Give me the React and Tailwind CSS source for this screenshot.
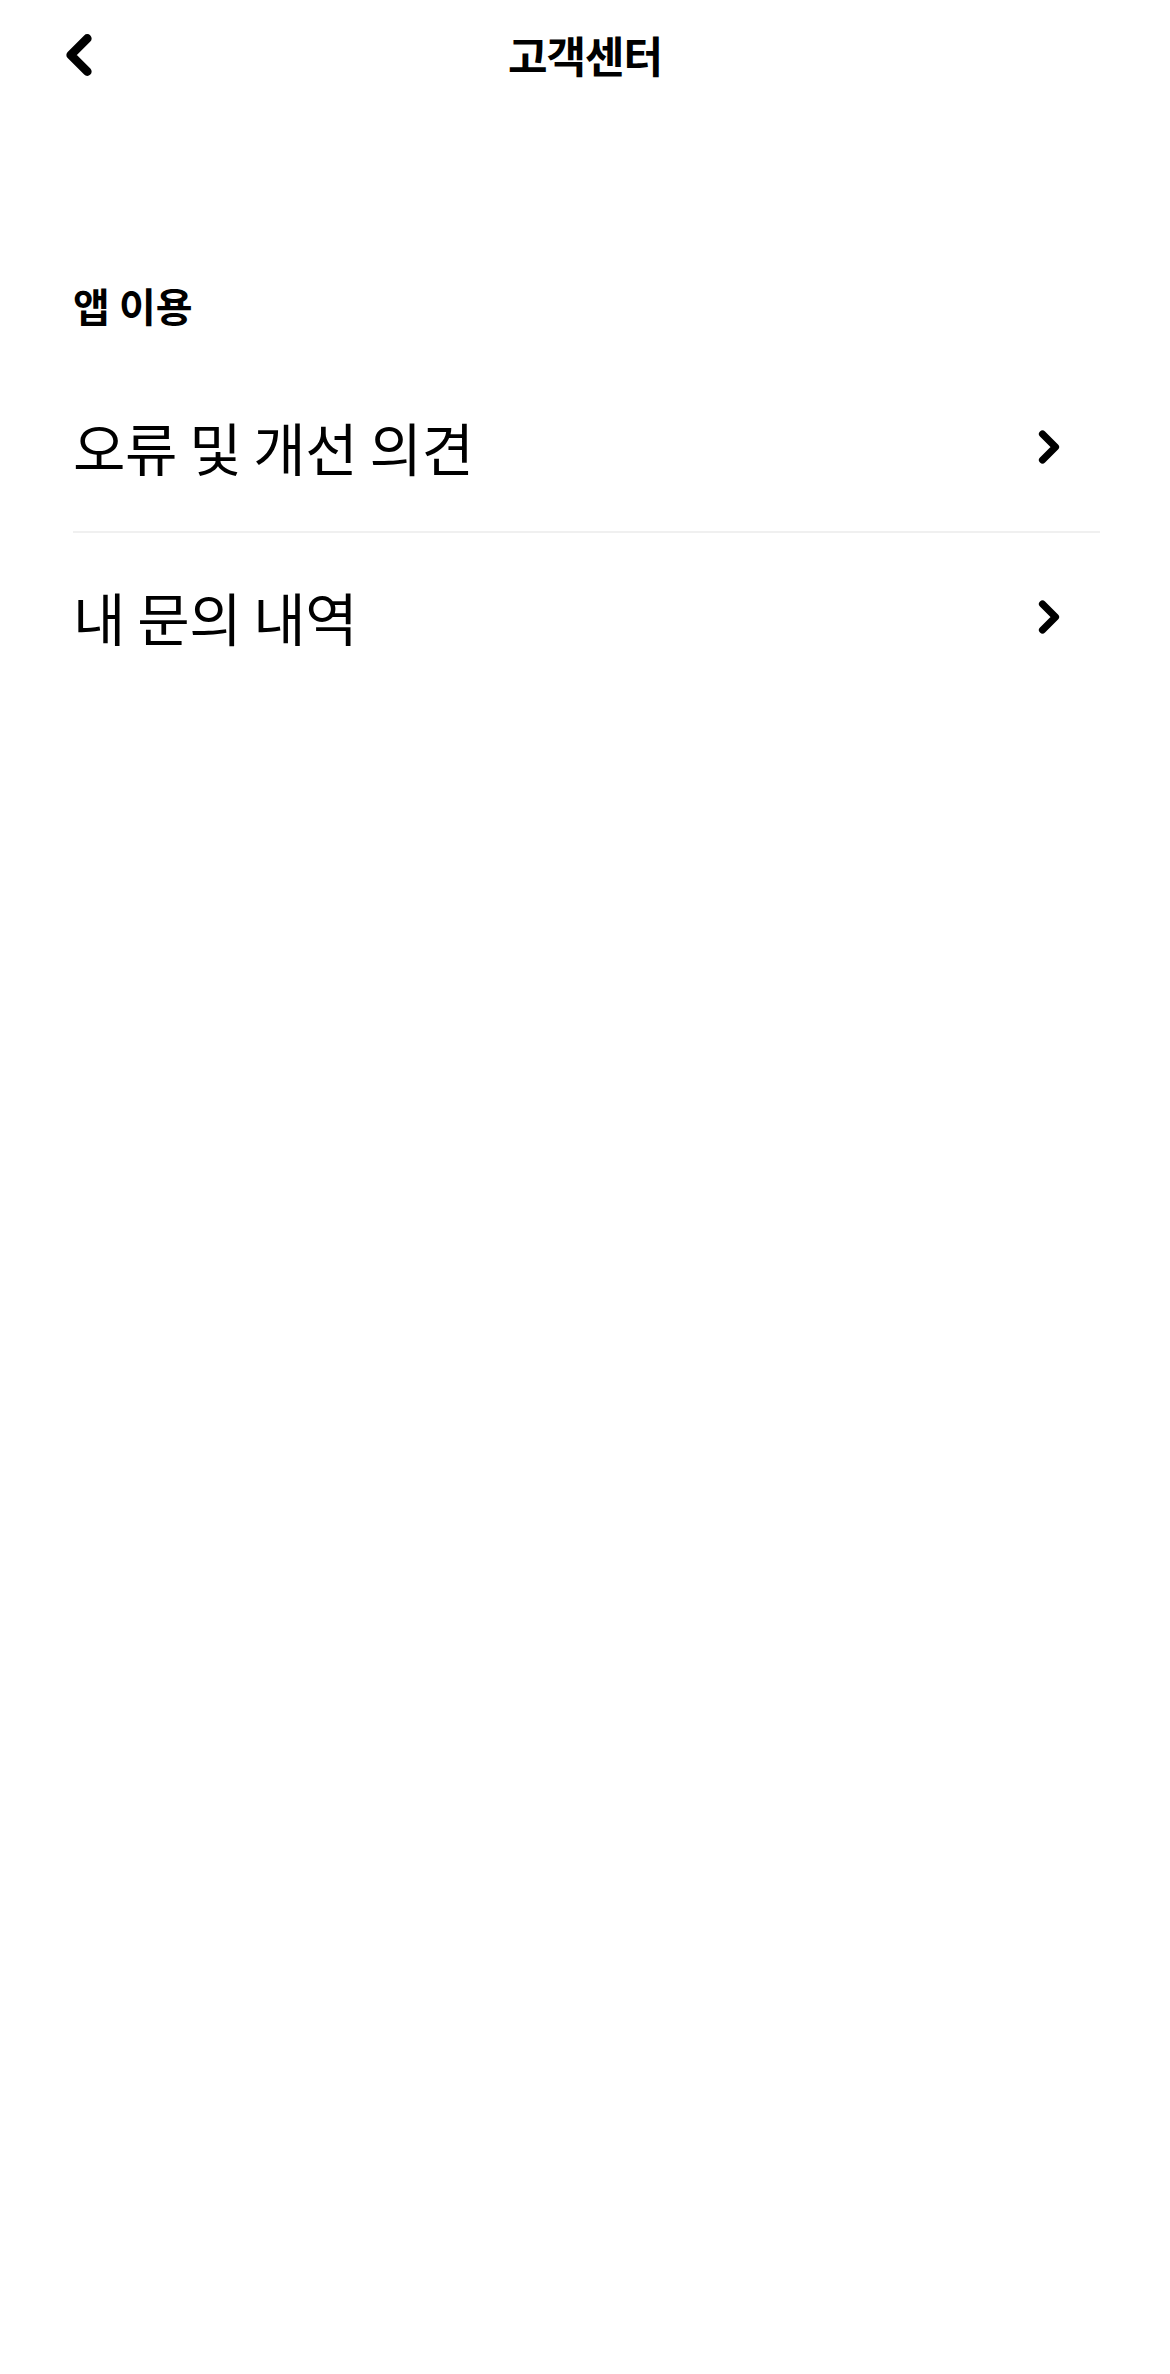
import { ChevronLeft, ChevronRight } from "lucide-react";

const font = { fontFamily: '"Noto Sans CJK KR", "Noto Sans", sans-serif' };

const MenuRow = ({ label }) => (
  <button className="flex h-[168px] w-full items-center justify-between text-left">
    <span className="text-[57px] font-normal tracking-[-0.5px] text-black">{label}</span>
    <ChevronRight className="mr-[25px] h-[52px] w-[52px] text-black" strokeWidth={3.3} />
  </button>
);

export default function App() {
  return (
    <div className="min-h-[2374px] w-full bg-white" style={font}>
      {/* 헤더 */}
      <header className="relative flex h-[108px] items-center justify-center">
        <button className="absolute left-[46px] top-[22px]">
          <ChevronLeft className="h-[66px] w-[66px] text-black" strokeWidth={3.2} />
        </button>
        <h1 className="text-[43px] font-bold tracking-[-1px] text-black">고객센터</h1>
      </header>

      <section className="pl-[73px] pr-[70px] pt-[173px]">
        <h2 className="text-[40px] font-bold leading-[48px] text-black">앱 이용</h2>
        <div className="mt-[34px]">
          <MenuRow label="오류 및 개선 의견" />
          <div className="h-[2px] bg-[#f0f0f0]" />
          <MenuRow label="내 문의 내역" />
        </div>
      </section>
    </div>
  );
}
